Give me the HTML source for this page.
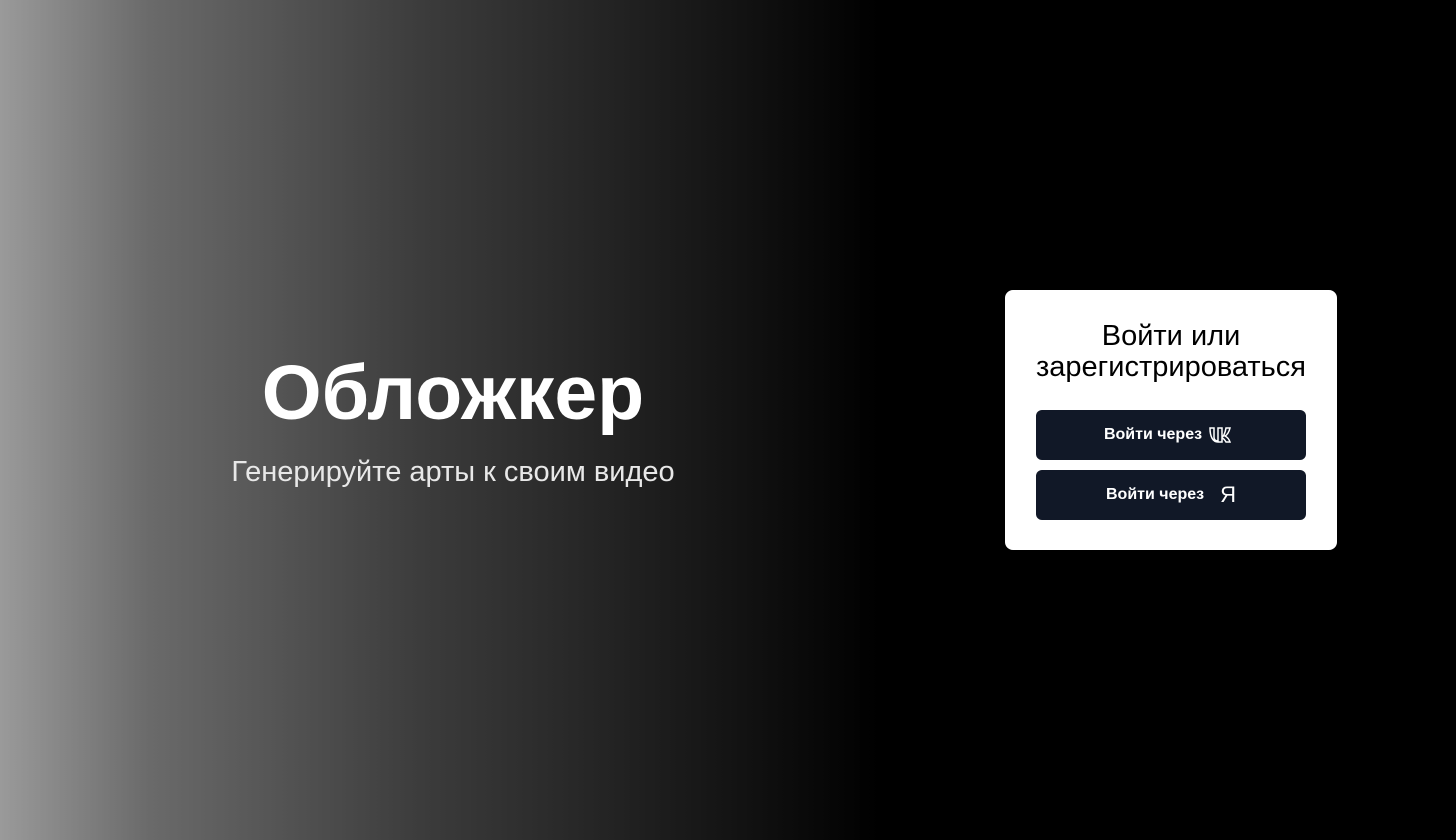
<!DOCTYPE html>
<html><head><meta charset="utf-8"><style>
html,body{margin:0;padding:0;width:1456px;height:840px;overflow:hidden;background:#000;font-family:"Liberation Sans","DejaVu Sans",sans-serif}
.bg{position:absolute;left:0;top:0;width:1456px;height:840px;background:linear-gradient(90deg,#9a9a9a 0px,#6a6a6a 150px,#3c3c3c 420px,#1e1e1e 650px,#000 880px,#000 100%)}
.title{position:absolute;left:0;width:906px;top:348px;text-align:center;color:#fff;font-weight:bold;font-size:77px;line-height:90px}
.sub{position:absolute;left:0;width:906px;top:455px;text-align:center;color:#e8e8e8;font-size:29px;line-height:34px}
.card{position:absolute;left:1005px;top:290px;width:332px;height:260px;background:#fff;border-radius:8px}
.card h2{margin:0;position:absolute;top:31px;left:0;width:332px;text-align:center;font-weight:normal;font-size:29px;line-height:31px;color:#000}
.btn{position:absolute;left:31px;width:270px;height:50px;background:#111827;border-radius:6px;color:#fff;font-weight:bold;font-size:16px;display:flex;align-items:center;justify-content:center;gap:6px}
</style></head><body>
<div class="bg"></div>
<div class="title">Обложкер</div>
<div class="sub">Генерируйте арты к своим видео</div>
<div class="card">
<h2>Войти или<br>зарегистрироваться</h2>
<div class="btn" style="top:120px">Войти через
<svg width="30" height="20" viewBox="0 0 30 20"><path d="M2 3h4v9c0 3 2 4 4 4V3h4v9c1 0 3-3 4-9h4c-1 4-3 7-5 8 2 1 4 3 5 6h-4c-1-2-3-4-4-4v4h-4C5 17 2 12 2 3z" fill="none" stroke="#fff" stroke-width="1.5"/></svg></div>
<div class="btn" style="top:180px">Войти через <span style="font-weight:normal;font-size:22px;margin-left:10px">Я</span></div>
</div>
</body></html>
